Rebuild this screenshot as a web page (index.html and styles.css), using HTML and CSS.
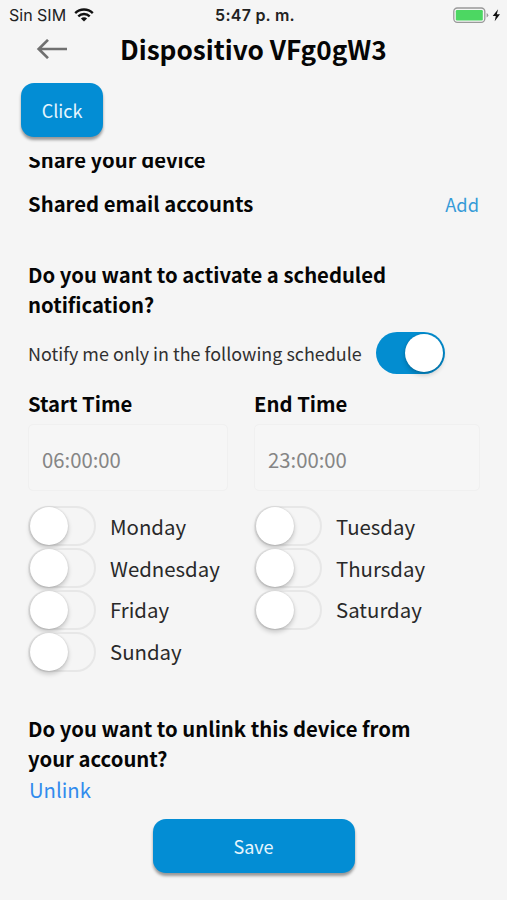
FILE: index.html
```html
<!DOCTYPE html>
<html lang="en">
<head>
<meta charset="utf-8">
<title>Dispositivo VFg0gW3</title>
<link rel="stylesheet" href="styles.css">
</head>
<body>
<div class="screen">
  <div class="status">
    <div class="carrier"><span>Sin SIM</span>
      <svg class="wifi" width="20" height="14" viewBox="0 0 20 14" fill="none" stroke="#111" stroke-width="2.4"><path d="M1.2 5.1a12.6 12.6 0 0 1 17.6 0"/><path d="M4.3 8.3a8.1 8.1 0 0 1 11.4 0"/><path d="M10 13.5 6.9 10.5a4.4 4.4 0 0 1 6.2 0z" fill="#111" stroke="none"/></svg>
    </div>
    <div class="clock">5:47 p. m.</div>
    <div class="power">
      <svg width="48" height="17" viewBox="0 0 48 17"><rect x=".8" y="1" width="31" height="14.3" rx="3.5" fill="#f5f5f5" stroke="#999" stroke-width="1.3"/><rect x="2.8" y="3" width="27" height="10.4" rx="1.2" fill="#4cd762"/><path d="M33.6 6v4.5q1.7-.6 1.7-2.2T33.6 6z" fill="#999"/><path d="M45.1 2.3 39.7 9h3.1l-1.1 5.2L47 7.2h-3.2z" fill="#111"/></svg>
    </div>
  </div>
  <header class="header">
    <svg class="back" width="32" height="20" viewBox="0 0 32 20" fill="none" stroke="#707070" stroke-width="2.7"><path d="M31 10H3M12 .9 2.7 10l9.3 9.1"/></svg>
    <h1 class="title">Dispositivo VFg0gW3</h1>
  </header>
  <div class="toolbar"><button class="btn btn-click">Click</button></div>
  <main class="content">
    <h2 class="heading clipped">Share your device</h2>
    <div class="row shared"><h2 class="heading">Shared email accounts</h2><a class="add">Add</a></div>
    <h2 class="heading schedule">Do you want to activate a scheduled<br>notification?</h2>
    <div class="notify"><span>Notify me only in the following schedule</span><span class="switch on"></span></div>
    <div class="times">
      <label><span class="heading">Start Time</span><span class="field field-start">06:00:00</span></label>
      <label><span class="heading">End Time</span><span class="field">23:00:00</span></label>
    </div>
    <div class="days">
      <div class="day"><span class="switch"></span><span>Monday</span></div>
      <div class="day"><span class="switch"></span><span>Tuesday</span></div>
      <div class="day"><span class="switch"></span><span>Wednesday</span></div>
      <div class="day"><span class="switch"></span><span>Thursday</span></div>
      <div class="day"><span class="switch"></span><span>Friday</span></div>
      <div class="day"><span class="switch"></span><span>Saturday</span></div>
      <div class="day"><span class="switch"></span><span>Sunday</span></div>
    </div>
    <h2 class="heading unlink-title">Do you want to unlink this device from<br>your account?</h2>
    <a class="unlink">Unlink</a>
  </main>
  <footer class="footer"><button class="btn btn-save">Save</button></footer>
</div>
</body>
</html>
```
FILE: styles.css
```css
* { box-sizing: border-box; }
body { margin: 0; background: #f5f5f5; color: #050505; font-family: "Noto Sans CJK SC", "Open Sans", sans-serif; }
.screen { width: 507px; height: 900px; overflow: hidden; display: flex; flex-direction: column; }
.status { height: 30px; flex: none; display: grid; grid-template-columns: 1fr auto 1fr; align-items: center; padding: 0 6px 0 9px; font: 16px/30px Inter, sans-serif; color: #222; }
.carrier { display: flex; align-items: center; gap: 9px; }
.wifi { margin: 0 0 1px -1px; }
.clock { font-weight: 600; letter-spacing: .25px; }
.power { display: flex; justify-content: flex-end; }
.header { height: 40px; flex: none; display: flex; align-items: center; padding-left: 36px; }
.back { flex: none; margin-bottom: 3px; }
.title { margin: 0 0 2px 52px; font-size: 26.2px; line-height: 38px; font-weight: 700; white-space: nowrap; }
.toolbar { height: 87px; flex: none; padding: 13px 0 0 21px; }
.btn { display: block; border: 0; padding: 0; height: 54px; border-radius: 13px; background: #038dd4; color: #e6f5fd; font: 18px/54px "Noto Sans CJK SC", sans-serif; box-shadow: 0 3px 3px rgba(0,0,0,.38); }
.btn-click { width: 82px; }
.btn-save { width: 202px; }
.content { height: 656px; flex: none; overflow: hidden; padding: 0 28px; }
.heading { display: block; margin: 0; font-size: 20.3px; line-height: 30px; font-weight: 700; white-space: nowrap; }
.clipped { margin-top: -13px; }
.row { display: flex; justify-content: space-between; align-items: flex-start; }
.shared { margin-top: 14px; height: 31px; }
.add { color: #359bd8; font-size: 18.3px; line-height: 30px; padding-top: 1px; }
.schedule { margin-top: 40px; }
.notify { display: flex; align-items: center; height: 42px; margin-top: 13px; gap: 14px; font-size: 17.93px; line-height: 43px; color: #303030; white-space: nowrap; }
.switch { flex: none; display: flex; width: 69px; height: 42px; padding: 2px; border: 2px solid #e7e7e7; border-radius: 21px; }
.switch::before { content: ""; width: 38px; height: 38px; border-radius: 50%; background: #fff; box-shadow: 0 3px 5px rgba(0,0,0,.2), 0 0 2px rgba(0,0,0,.16); }
.switch.on { border: 0; background: #038dd0; justify-content: flex-end; }
.times, .days { display: grid; grid-template-columns: 226px 226px; }
.times { margin-top: 14px; }
.field { display: block; height: 67px; margin-top: 6px; padding-left: 13px; border: 1px solid #f0f0f0; border-radius: 5px; background: #f6f6f6; color: #858585; font-size: 20.3px; line-height: 68px; }
.field-start { width: 200px; }
.days { margin-top: 14.5px; grid-auto-rows: 41.8px; }
.day { display: flex; align-items: center; gap: 14px; font-size: 20.4px; line-height: 41px; color: #292929; }
.day .switch { width: 68px; height: 40px; padding: 0; }
.day .switch::before { margin-top: -1px; }
.unlink-title { margin-top: 40.5px; }
.unlink { display: block; margin-left: 1px; font-size: 20.3px; line-height: 33px; color: #318bed; }
.footer { height: 87px; display: flex; justify-content: center; padding-top: 6px; }
```
